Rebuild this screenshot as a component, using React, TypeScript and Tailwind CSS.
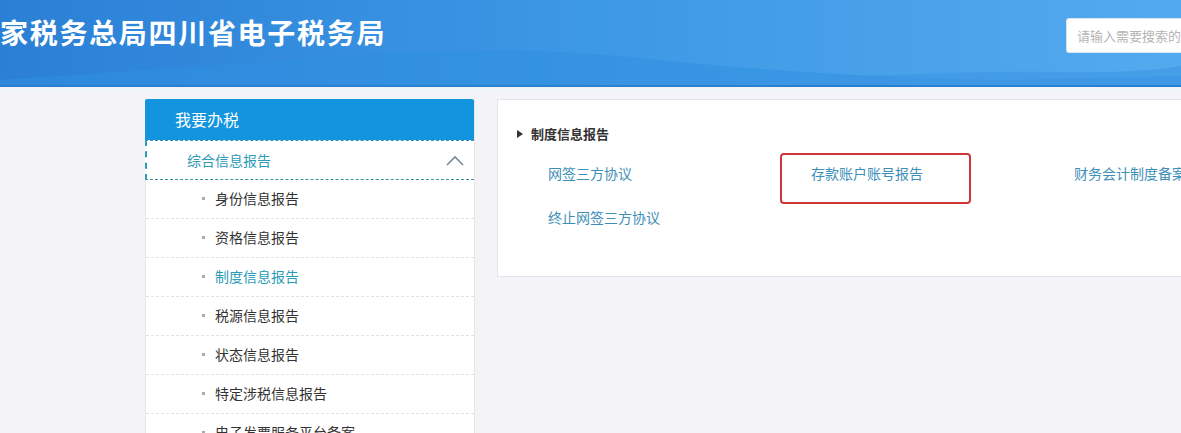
import React from 'react';

const items = [
  { label: '身份信息报告' },
  { label: '资格信息报告' },
  { label: '制度信息报告', active: true },
  { label: '税源信息报告' },
  { label: '状态信息报告' },
  { label: '特定涉税信息报告' },
  { label: '电子发票服务平台备案' },
];

function HeaderWave() {
  return (
    <svg className="absolute inset-0 w-full h-full" viewBox="0 0 1181 87" preserveAspectRatio="none">
      <path d="M0 80 C 120 72, 200 66, 320 58 C 420 50, 520 46, 640 58 C 720 66, 820 76, 1000 80 L 1181 76 L 1181 87 L 0 87 Z" fill="#2f8fe0" opacity="0.55" />
      <path d="M700 87 C 820 78, 940 70, 1060 72 C 1120 73, 1160 70, 1181 66 L 1181 87 Z" fill="#3d96e4" opacity="0.6" />
      <rect x="0" y="85" width="1181" height="2" fill="#2a7fcf" />
    </svg>
  );
}

export default function App() {
  const font = { fontFamily: '"Microsoft YaHei", "Noto Sans CJK SC", "Noto Sans", sans-serif' };
  return (
    <div className="w-[1181px] h-[433px] overflow-hidden bg-[#f3f3f8]" style={font}>
      {/* Header */}
      <header className="relative h-[87px] overflow-hidden bg-gradient-to-r from-[#2b80d6] via-[#3d98e5] to-[#54aaee] flex items-start">
        <HeaderWave />
        <h1 className="relative pt-[14px] text-[28px] leading-[36px] font-bold text-white tracking-[1.7px] whitespace-nowrap">
          家税务总局四川省电子税务局
        </h1>
        <div className="relative ml-auto mt-[18px] -mr-[90px] w-[205px] h-[35px] bg-white border border-[#d8e6f3] rounded-[3px] flex items-center pl-[10px] shrink-0">
          <span className="text-[13px] text-[#b5b5b5] whitespace-nowrap">请输入需要搜索的内容</span>
        </div>
      </header>
      <div className="h-[3px] bg-[#eef4f7]" />

      {/* Body */}
      <div className="flex pl-[145px] pt-[9px] gap-[22px]">
        {/* Sidebar */}
        <aside className="w-[330px] shrink-0 bg-white border-r border-[#e6e6e6]">
          <div className="h-[41px] bg-[#1294de] rounded-t-[2px] flex items-center pl-[30px] pb-[2px] text-white text-[16px]">
            我要办税
          </div>
          <div className="h-[40px] flex items-center justify-between pl-[40px] pr-[9px] border-l-2 border-[#2b9bb6] border-t border-b border-dashed border-t-[#3a8ea6] border-b-[#3a8ea6] text-[14px] text-[#2b9bb6]">
            <span>综合信息报告</span>
            <svg width="20" height="12" viewBox="0 0 20 12" fill="none">
              <path d="M2 11 L10 3 L18 11" stroke="#7a8a94" strokeWidth="1.6" />
            </svg>
          </div>
          <ul className="border-l border-[#e6e6e6]">
            {items.map((it) => (
              <li
                key={it.label}
                className="h-[39px] flex items-center pl-[56px] pb-[2px] border-b border-dashed border-[#e3e3e3] text-[14px]"
              >
                <span className="w-[3px] h-[3px] bg-[#aaaaaa] mr-[10px]" />
                <span className={it.active ? 'text-[#2b9bb6]' : 'text-[#333333]'}>{it.label}</span>
              </li>
            ))}
          </ul>
        </aside>

        {/* Main panel */}
        <main className="w-[720px] shrink-0 self-start h-[178px] bg-white border border-[#e6e6e6] pt-[24px] pl-[19px]">
          <div className="flex items-center gap-[8px] text-[13px] font-bold text-[#333333] leading-[20px]">
            <svg width="6" height="8" viewBox="0 0 6 8">
              <path d="M0 0 L6 4 L0 8 Z" fill="#333333" />
            </svg>
            <span>制度信息报告</span>
          </div>
          <div className="grid grid-cols-[263px_263px_263px] pl-[31px] mt-[19px] gap-y-[24px] text-[14px] leading-[20px] text-[#3e8fb8]">
            <span>网签三方协议</span>
            <span className="relative">
              存款账户账号报告
              <span className="absolute left-[-31px] top-[-10px] w-[191px] h-[51px] border-2 border-[#cf3436] rounded-[4px]" />
            </span>
            <span className="whitespace-nowrap">财务会计制度备案</span>
            <span>终止网签三方协议</span>
          </div>
        </main>
      </div>
    </div>
  );
}
